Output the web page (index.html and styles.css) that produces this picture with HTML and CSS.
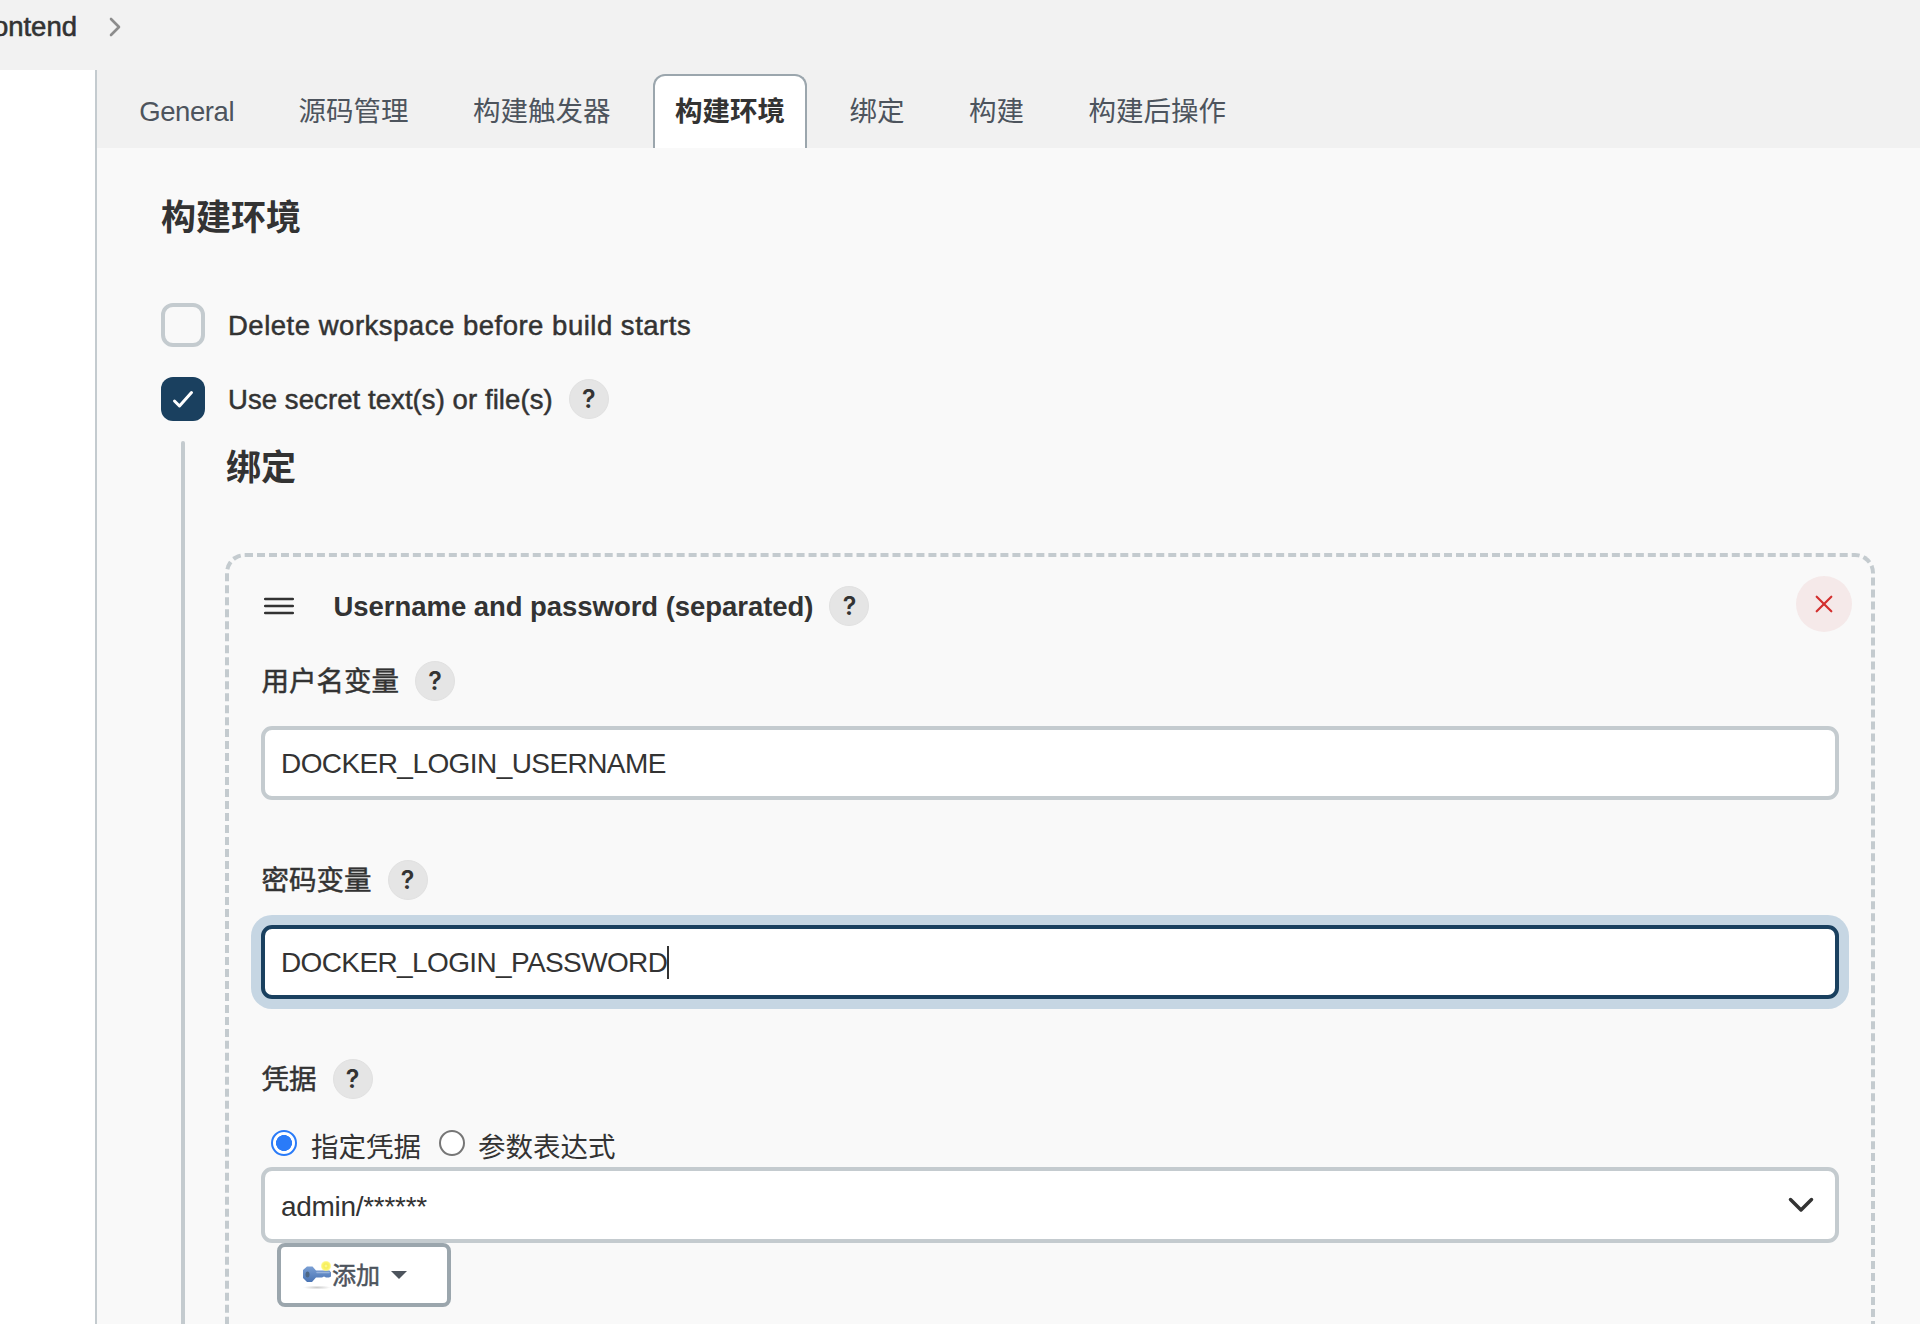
FILE: index.html
```html
<!DOCTYPE html>
<html lang="zh-CN">
<head>
<meta charset="utf-8">
<title>构建环境</title>
<link rel="stylesheet" href="styles.css">
</head>
<body>
<header class="breadcrumbs">
  <span class="crumb">ontend</span>
  <svg class="crumb-arrow" viewBox="0 0 12 20"><path d="M2 2l8 8-8 8"/></svg>
</header>
<div class="page">
  <aside class="side"></aside>
  <main class="main">
    <nav class="tabs">
      <a class="tab tab-latin">General</a>
      <a class="tab">源码管理</a>
      <a class="tab">构建触发器</a>
      <a class="tab active">构建环境</a>
      <a class="tab">绑定</a>
      <a class="tab">构建</a>
      <a class="tab">构建后操作</a>
    </nav>
    <section class="config">
      <h2 class="title">构建环境</h2>
      <div class="check-row">
        <span class="checkbox"></span>
        <span class="check-label delete-label">Delete workspace before build starts</span>
      </div>
      <div class="check-row">
        <span class="checkbox checked"><svg viewBox="0 0 44 44"><path d="M13.500 24l5 5L30.500 15.500"/></svg></span>
        <span class="check-label secret-label">Use secret text(s) or file(s)</span>
        <span class="help">?</span>
      </div>
      <div class="nested">
        <h2 class="title subtitle">绑定</h2>
        <div class="binding">
          <div class="binding-head">
            <svg class="grip" viewBox="0 0 30 18"><path d="M1.200 2h27.600M1.200 9h27.600M1.200 16h27.600"/></svg>
            <span class="binding-name">Username and password (separated)</span>
            <span class="help">?</span>
            <button class="remove"><svg viewBox="0 0 56 56"><path d="M20.700 20.700l14.600 14.600M35.300 20.700l-14.600 14.600"/></svg></button>
          </div>
          <div class="field-label"><span class="label-text">用户名变量</span><span class="help">?</span></div>
          <div class="input"><span class="value user-value">DOCKER_LOGIN_USERNAME</span></div>
          <div class="field-label"><span class="label-text">密码变量</span><span class="help">?</span></div>
          <div class="input focused"><span class="value pass-value">DOCKER_LOGIN_PASSWORD</span><i class="caret"></i></div>
          <div class="field-label"><span class="label-text">凭据</span><span class="help">?</span></div>
          <div class="radios">
            <span class="radio on"></span><span class="radio-label">指定凭据</span>
            <span class="radio"></span><span class="radio-label">参数表达式</span>
          </div>
          <div class="input select"><span class="value select-value">admin/******</span>
            <svg class="chevron" viewBox="0 0 26 18"><path d="M2.500 3.500L13 14 23.500 3.500"/></svg></div>
          <button class="add">
            <svg class="key" viewBox="0 0 30 30">
              <defs>
                <linearGradient id="keyFill" x1="0" y1="0" x2="0" y2="1"><stop offset="0" stop-color="#7a9fd4"/><stop offset="1" stop-color="#4a74b4"/></linearGradient>
                <radialGradient id="glow"><stop offset="0" stop-color="#fffcae"/><stop offset=".35" stop-color="#f6ee58"/><stop offset=".75" stop-color="#fdf674"/><stop offset="1" stop-color="#fdf674" stop-opacity="0"/></radialGradient>
                <radialGradient id="shade"><stop offset="0" stop-color="#000" stop-opacity=".2"/><stop offset="1" stop-color="#000" stop-opacity="0"/></radialGradient>
              </defs>
              <ellipse cx="15" cy="27.500" rx="14" ry="2" fill="url(#shade)"/>
              <path d="M5 6.500h5.500l3.500 4h13.500l1.500 2v4l-2 1h-3l-2-1-2 1h-6l-4 4.500H5L1 18v-8z" fill="url(#keyFill)"/>
              <path d="M15 12.500h12" stroke="#97b3dc" stroke-width="1.500"/>
              <ellipse cx="5.500" cy="14.500" rx="2" ry="3" fill="#4d6785"/>
              <circle cx="24" cy="6" r="5.500" fill="url(#glow)"/>
            </svg>
            <span class="label-text">添加</span>
            <i class="drop"></i>
          </button>
        </div>
      </div>
    </section>
  </main>
</div>
</body>
</html>
```
FILE: styles.css
```css
* { box-sizing: border-box; }
body {
  margin: 0;
  height: 1324px;
  overflow: hidden;
  display: flex;
  flex-direction: column;
  background: #f9f9f9;
  color: #333;
  font: 27.5px/40px "Liberation Sans", "Noto Sans CJK SC", sans-serif;
}
svg { display: block; fill: none; stroke-linecap: round; stroke-linejoin: round; }
.breadcrumbs {
  height: 70px;
  flex: none;
  display: flex;
  gap: 32px;
  padding-top: 7px;
  background: #f2f2f2;
  overflow: hidden;
}
.crumb {
  width: 77px;
  display: flex;
  justify-content: flex-end;
  -webkit-text-stroke: .6px;
}
.crumb-arrow { width: 12px; height: 20px; margin-top: 10px; stroke: #8c8c8c; stroke-width: 2.6px; }
.page { flex: 1; display: flex; min-height: 0; overflow: hidden; }
.side { width: 97px; flex: none; background: #fff; border-right: 2px solid #c4cbcf; }
.main { flex: 1; min-width: 0; overflow: hidden; }
.tabs {
  height: 78px;
  display: flex;
  align-items: flex-end;
  gap: 20px;
  padding-left: 20px;
  background: #f1f1f1;
}
.tab {
  height: 74px;
  padding: 16px 20.250px 0;
  border: 2px solid transparent;
  border-bottom: 0;
  border-radius: 12px 12px 0 0;
  color: #4d545d;
  white-space: nowrap;
}
.tab-latin { letter-spacing: -.430px; }
.tab.active { background: #fff; border-color: #9ba6ad; color: #333; font-weight: 700; }
.config { padding: 46px 45px 0 64px; }
.title { margin: 0; font-size: 35px; line-height: 48px; font-weight: 700; }
.check-row { display: flex; align-items: center; height: 44px; margin-top: 30px; white-space: nowrap; }
.title + .check-row { margin-top: 61px; }
.checkbox { width: 44px; height: 44px; border: 4px solid #c4cbcf; border-radius: 12px; margin-right: 23px; }
.checkbox.checked { border: 0; background: #1a405f; }
.checkbox svg { stroke: #fff; stroke-width: 3px; }
.check-label { padding-top: 2px; -webkit-text-stroke: .5px; }
.delete-label { letter-spacing: .510px; }
.secret-label { letter-spacing: .080px; }
.help {
  flex: none;
  width: 40px;
  height: 40px;
  margin-left: 16px;
  border-radius: 50%;
  background: #e5e5e5;
  border: 1px solid #e1e1e1;
  font: 600 25px/39px Inter, sans-serif;
  text-align: center;
}
.nested { margin: 20px 0 0 20px; padding-left: 40px; height: 900px; position: relative; }
.nested::before {
  content: "";
  position: absolute;
  left: 0;
  top: 0;
  width: 4px;
  height: 100%;
  border-radius: 2px;
  background: #c4cbcf;
}
.subtitle { padding-top: 3px; height: 112px; margin-left: 5px; }
.binding {
  margin-left: 4px;
  height: 850px;
  border: 4px dashed #c4cbcf;
  border-radius: 20px;
  padding: 19px 32px 0;
}
.binding-head { display: flex; align-items: center; height: 60px; white-space: nowrap; }
.grip { width: 30px; height: 18px; margin: 0 39.500px 0 3px; stroke: #333; stroke-width: 2.500px; }
.binding-name { padding-top: 2px; font-weight: 700; letter-spacing: -.045px; }
.remove {
  width: 56px;
  height: 56px;
  padding: 0;
  border: 0;
  border-radius: 50%;
  background: #f5e9e9;
  margin: -4px -13px 0 auto;
}
.remove svg { stroke: #d3302f; stroke-width: 2.200px; }
.field-label { display: flex; align-items: center; height: 40px; margin-top: 61px; -webkit-text-stroke: .5px; white-space: nowrap; }
.field-label .help { -webkit-text-stroke: 0; }
.label-text { padding-top: 2px; }
.field-label .label-text { padding-left: .500px; }
.binding-head + .field-label { margin-top: 25px; }
.input {
  height: 74px;
  margin-top: 25px;
  border: 4px solid #c4cbcf;
  border-radius: 11px;
  background: #fff;
  padding: 0 16px;
  display: flex;
  align-items: center;
}
.value { padding-top: 1px; font-size: 28px; }
.user-value { letter-spacing: -.570px; }
.pass-value { letter-spacing: -.620px; }
.select-value { letter-spacing: -.300px; padding-top: 3px; }
.input.focused { border-color: #1a405f; box-shadow: 0 0 0 10px #c6d6e3; }
.field-label:has(+ .focused) { margin-top: 60px; }
.focused + .field-label { margin-top: 60px; }
.caret { width: 2px; height: 33px; background: #333; }
.radios { display: flex; height: 40px; margin-top: 28px; padding-left: 10px; }
.radio { width: 26px; height: 26px; margin-top: 3px; border: 2px solid #767676; border-radius: 50%; background: #fff; }
.radio.on { border-color: #2a7bf8; background: radial-gradient(circle, #2a7bf8 0 7.700px, #fff 8.300px); }
.radio-label { margin: 1px 18px 0 14px; }
.radio:not(.on) + .radio-label { margin-left: 13px; }
.select { height: 76px; margin-top: 0; }
.chevron { width: 26px; height: 18px; margin: -1px 5px 0 auto; stroke: #333; stroke-width: 3.500px; }
.add {
  width: 174px;
  height: 64px;
  margin-left: 16px;
  display: flex;
  align-items: center;
  padding: 0 0 0 21px;
  border: 4px solid #9ba6ad;
  border-radius: 8px;
  background: #fff;
  color: #4d545d;
  font: 24px/40px "Liberation Sans", "Noto Sans CJK SC", sans-serif;
  -webkit-text-stroke: .5px;
}
.key { width: 30px; height: 30px; margin-right: 0; }
.drop { margin-left: 10.500px; border: 8.500px solid transparent; border-top-color: #4d545d; border-bottom: 0; }
```
